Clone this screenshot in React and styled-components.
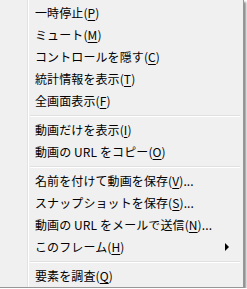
import React from 'react';
import styled, { createGlobalStyle } from 'styled-components';

const GlobalStyle = createGlobalStyle`
  html, body {
    margin: 0;
    padding: 0;
    background: #ffffff;
  }
  body {
    font-family: "Noto Sans CJK JP", "Noto Sans", sans-serif;
  }
`;

const items = [
  { label: '一時停止', key: 'P' },
  { label: 'ミュート', key: 'M' },
  { label: 'コントロールを隠す', key: 'C' },
  { label: '統計情報を表示', key: 'T' },
  { label: '全画面表示', key: 'F' },
  { sep: true },
  { label: '動画だけを表示', key: 'I' },
  { label: '動画の URL をコピー', key: 'O' },
  { sep: true },
  { label: '名前を付けて動画を保存', key: 'V', dots: true },
  { label: 'スナップショットを保存', key: 'S', dots: true },
  { label: '動画の URL をメールで送信', key: 'N', dots: true },
  { label: 'このフレーム', key: 'H', sub: true },
  { sep: true },
  { label: '要素を調査', key: 'Q' },
];

const ContextMenu = () => (
  <Menu>
    {items.map((it, i) =>
      it.sep ? (
        <Separator key={i} />
      ) : (
        <Item key={i}>
          <Label>
            {it.label}(<u>{it.key}</u>){it.dots && '...'}
          </Label>
          {it.sub && <Arrow />}
        </Item>
      )
    )}
  </Menu>
);

export default function App() {
  return (
    <>
      <GlobalStyle />
      <ContextMenu />
    </>
  );
}

const Menu = styled.div`
  width: 244px;
  box-sizing: border-box;
  padding: 2px 1px 0 2px;
  border-right: 1px solid #979797;
  border-bottom: 1px solid #979797;
  box-shadow: 2px 2px 2px rgba(0, 0, 0, 0.45);
  background: linear-gradient(
    to right,
    #f0f0f0 0 27px,
    #e2e3e3 27px 28px,
    #ffffff 28px 29px,
    #f0f0f0 29px
  );
  display: flex;
  flex-direction: column;
`;

const Item = styled.div`
  height: 22px;
  display: flex;
  align-items: center;
  justify-content: space-between;
  padding: 0 13px 0 33px;
  font-size: 12px;
  line-height: 22px;
  color: #000;
  white-space: nowrap;
`;

const Label = styled.span`
  letter-spacing: 0.1px;
  u {
    text-decoration-thickness: 1px;
    text-underline-offset: 2px;
  }
`;

const Arrow = styled.span`
  width: 0;
  height: 0;
  border-top: 4px solid transparent;
  border-bottom: 4px solid transparent;
  border-left: 4px solid #000;
`;

const Separator = styled.div`
  height: 7px;
  margin-left: 28px;
  margin-right: 2px;
  background: linear-gradient(
    to bottom,
    transparent 0 3px,
    #e0e0e0 3px 4px,
    #ffffff 4px 5px,
    transparent 5px
  );

  &:last-of-type {
    height: 6px;
  }
`;
